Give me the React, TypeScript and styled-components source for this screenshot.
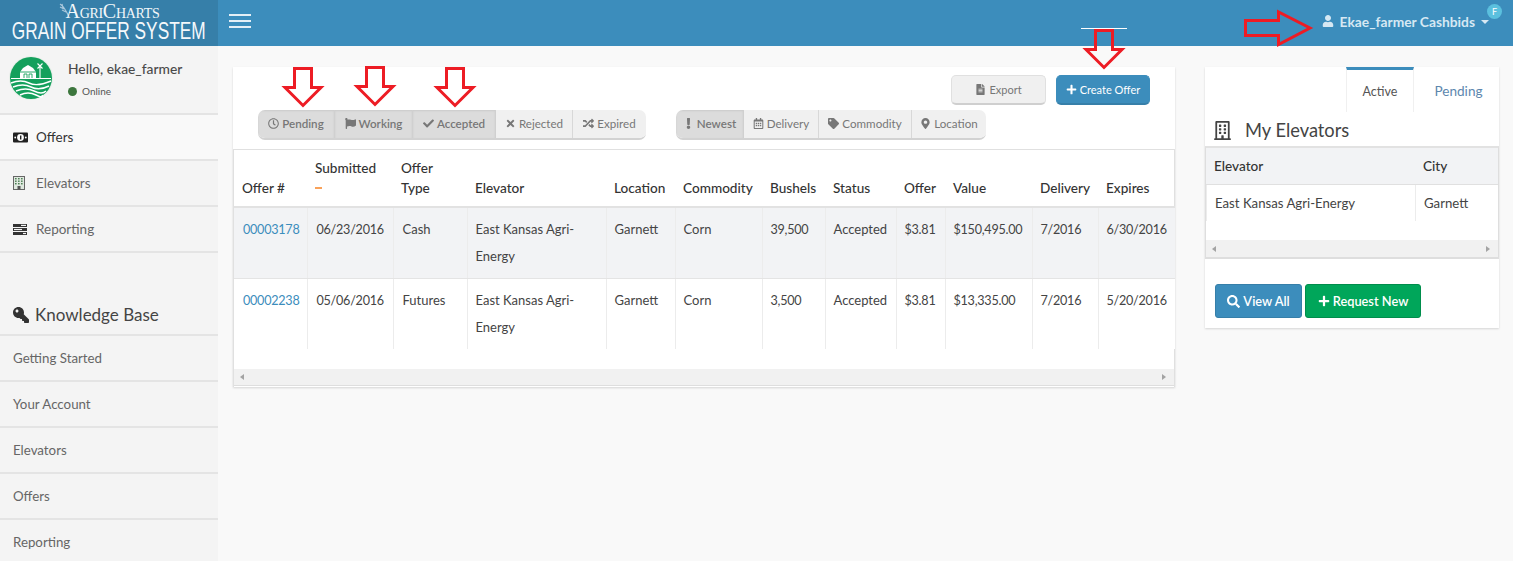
import React from "react";
import styled, { createGlobalStyle } from "styled-components";
import {
  FaRegClock, FaFlag, FaCheck, FaTimes, FaRandom, FaExclamation, FaRegCalendarAlt, FaTag,
  FaMapMarkerAlt, FaFileAlt, FaPlus, FaSearch, FaUser, FaRegBuilding, FaKey,
} from "react-icons/fa";

const Global = createGlobalStyle`
  html, body { margin: 0; padding: 0; height: 100%; overflow: hidden; background: #f9f9f9; }
  body { font-family: Lato, "Noto Sans", sans-serif; font-size: 14px; color: #333; }
  * { box-sizing: border-box; }
`;

const Page = styled.div`
  position: relative; width: 1513px; height: 561px; overflow: hidden;
  display: grid; grid-template-columns: 218px 1fr; grid-template-rows: 46px 1fr;
`;
const Logo = styled.div`
  background: #367fa9; color: #fff; display: flex; flex-direction: column; align-items: center; overflow: hidden;
`;
const Brand = styled.div`
  display: flex; align-items: flex-start; font-family: "Liberation Serif", serif; font-variant: small-caps; font-size: 20px; line-height: 16px; margin-top: 3px;
  letter-spacing: -0.3px; color: #f2f7fa;
`;
const Wheat = styled.svg`
  margin: 0 -5px 0 0;
`;
const SystemName = styled.div`
  font-family: "Liberation Sans", sans-serif; font-size: 24px; line-height: 24px; white-space: nowrap; transform: scaleX(0.72);
  color: #f4f8fb;
`;
const Navbar = styled.div`
  background: #3c8dbc; display: flex; align-items: center; justify-content: space-between; padding: 0 24px 0 11px; color: #fff;
`;
const Burger = styled.div`
  width: 22px; height: 14px; border-top: 2px solid #e4eff6; border-bottom: 2px solid #e4eff6; position: relative; margin-bottom: 4px;
  &::after { content: ""; position: absolute; left: 0; right: 0; top: 4px; height: 2px; background: #e4eff6; }
`;
const UserMenu = styled.div`
  position: relative; display: flex; align-items: center; gap: 6px; font-weight: 700; font-size: 13.8px; color: #d6e8f3; margin-bottom: 4px;
`;
const Caret = styled.span`
  width: 0; height: 0; border-left: 4px solid transparent; border-right: 4px solid transparent; border-top: 4px solid #d6e8f3; margin-top: 2px;
`;
const Badge = styled.span`
  position: absolute; right: -13px; top: -9px; width: 15px; height: 15px; border-radius: 50%; background: #5bc0de; color: #fff;
  font-size: 9px; font-weight: 400; display: flex; align-items: center; justify-content: center;
`;
const Sidebar = styled.aside`
  background: #f4f4f4; display: flex; flex-direction: column; color: #555;
`;
const UserPanel = styled.div`
  height: 67px; display: flex; gap: 15px; padding: 10px 9px;
`;
const Hello = styled.div`
  font-size: 13.8px; color: #4a4a4a; margin-top: 5px; font-weight: 500; line-height: 15px;
`;
const Online = styled.div`
  font-size: 10px; color: #555; display: flex; align-items: center; gap: 5px; margin-top: 9px;
`;
const Dot = styled.span`
  width: 9px; height: 9px; border-radius: 50%; background: #3c763d;
`;
const MenuItem = styled.div<{ $active?: boolean }>`
  height: 46px; border-top: 2px solid #e4e4e4; display: flex; align-items: center; gap: 8px; padding-left: 13px; font-size: 13.5px;
  background: ${p => (p.$active ? "#f9f9f9" : "transparent")}; color: ${p => (p.$active ? "#333" : "#666")};
`;
const MenuIcon = styled.span`
  width: 15px; display: flex; justify-content: flex-start;
`;
const MenuEnd = styled.div`
  height: 2px; background: #e4e4e4; flex: none;
`;
const KeyIcon = styled(FaKey)`
  transform: scaleX(-1); color: #333; font-size: 16px;
`;
const KbTitle = styled.div`
  margin-top: 47px; height: 34px; display: flex; align-items: center; gap: 6px; padding: 0 0 5px 13px; font-size: 17px; color: #444;
`;
const KbItem = styled.div`
  height: 46px; border-top: 2px solid #e4e4e4; display: flex; align-items: center; padding-left: 13px; font-size: 13.3px; color: #666;
`;
const Main = styled.main`
  display: flex; align-items: flex-start; gap: 30px; padding: 21px 14px 0 15px;
`;
const Card = styled.section<{ $w: number; $h: number }>`
  width: ${p => p.$w}px; height: ${p => p.$h}px; background: #fff; box-shadow: 0 1px 2px rgba(0,0,0,.15); flex: none; display: flex; flex-direction: column;
`;
const Toolbar = styled.div`
  height: 82px; display: grid; grid-template-columns: 1fr auto; align-content: start; padding: 8px 25px 0 25px;
`;
const TopActions = styled.div`
  grid-column: 1 / 3; display: flex; justify-content: flex-end; gap: 10px; height: 30px;
`;
const Action = styled.div<{ $primary?: boolean }>`
  width: ${p => (p.$primary ? 94 : 95)}px; height: 30px; padding-bottom: 1px; border-radius: 5px; display: flex; align-items: center; justify-content: center; gap: 3px; font-size: 11px;
  background: ${p => (p.$primary ? "#3c8dbc" : "#f0f0f0")}; color: ${p => (p.$primary ? "#fff" : "#777")};
  border: 1px solid ${p => (p.$primary ? "#3c8dbc" : "#e0e0e0")}; border-bottom: 2px solid ${p => (p.$primary ? "#367fa9" : "#cfcfcf")};
  & svg { font-size: 11px; }
`;
const Filters = styled.div`
  grid-column: 1 / 3; display: flex; gap: 30px; margin-top: 5px;
`;
const Group = styled.div`
  display: flex; height: 30px; border-radius: 7px; overflow: hidden; border-bottom: 2px solid #d2d2d2;
`;
const Seg = styled.div<{ $on?: boolean; $w: number }>`
  width: ${p => p.$w}px; padding-bottom: 1px; display: flex; align-items: center; justify-content: center; gap: 3px; font-size: 11.6px; color: #777;
  font-weight: ${p => (p.$on ? 600 : 400)};
  background: ${p => (p.$on ? "#dcdcdc" : "#f0f0f0")}; border-right: 1px solid ${p => (p.$on ? "#d0d0d0" : "#d8d8d8")};
  ${p => (p.$on ? "box-shadow: inset 0 1px 2px rgba(0,0,0,.08);" : "")}
  &:last-child { border-right: 0; }
  & svg { font-size: 11px; }
`;
const TableWrap = styled.div`
  flex: 1; border: 1px solid #e0e0e0; border-width: 1px 1px 0 1px; display: flex; flex-direction: column; justify-content: space-between;
`;
const Table = styled.table`
  border-collapse: collapse; table-layout: fixed; width: 941px; font-size: 13px;
`;
const Th = styled.th<{ $w: number }>`
  width: ${p => p.$w}px; height: 57px; padding: 0 8px 8px; text-align: left; vertical-align: bottom; font-weight: 500; color: #333; line-height: 20px; border-bottom: 2px solid #e2e2e2; font-size: 13.6px;
  white-space: nowrap;
`;
const Tr = styled.tr<{ $alt?: boolean }>`
  background: ${p => (p.$alt ? "#f2f3f5" : "#fff")};
`;
const Td = styled.td<{ $num?: boolean }>`
  height: 71px; padding: 8px 4px 0 8px; vertical-align: top; line-height: 27px; color: #444; border-left: 1px solid #ececec; border-bottom: 1px solid #e4e4e4;
  ${p => (p.$num ? "font-size: 12.6px; letter-spacing: -0.25px;" : "")}
  &:nth-child(-n + 3) { padding-left: 9px; }
  &:first-child { border-left: 0; }
  tr:last-child > & { border-bottom: 0; }
`;
const NumLink = styled.span`
  color: #3c8dbc;
`;
const SortMark = styled.span`
  display: block; width: 7px; height: 2px; background: #f9a25a; margin: 9px 0;
`;
const Scroll = styled.div<{ $flat?: boolean }>`
  height: 17px; background: #f1f1f1; display: flex; align-items: center; justify-content: space-between; padding: 0 8px 0 6px; flex: none;
  ${p => (p.$flat ? "" : "border-bottom: 1px solid #dedede; margin-bottom: 1px;")}
`;
const Arrowhead = styled.span<{ $dir: "l" | "r" }>`
  width: 0; height: 0; border-top: 3.5px solid transparent; border-bottom: 3.5px solid transparent;
  ${p => (p.$dir === "l" ? "border-right: 4px solid #a3a3a3;" : "border-left: 4px solid #a3a3a3;")}
`;
const Tabs = styled.div`
  display: flex; justify-content: flex-end; height: 45px;
`;
const Tab = styled.div<{ $on?: boolean }>`
  width: 68px; display: flex; align-items: center; justify-content: center; font-size: 12.5px;
  ${p => (p.$on ? "border-top: 3px solid #3c8dbc; border-left: 1px solid #f0f0f0; border-right: 1px solid #f0f0f0; color: #555;" : "color: #5d87ae; margin-top: 3px; width: 85px; font-size: 13.6px; padding-left: 4px;")}
`;
const PanelTitle = styled.h2`
  margin: 0; height: 34px; padding: 2px 0 0 8px; display: flex; align-items: center; gap: 13px; font-size: 18.3px; font-weight: 400; color: #444;
  & svg { font-size: 19px; color: #444; }
`;
const SideTable = styled.div`
  border: 1px solid #dedede; border-width: 2px 1px 2px 1px; border-top-color: #e2e2e2; height: 113px; display: flex; flex-direction: column;
`;
const SideHead = styled.div`
  display: grid; grid-template-columns: 209px 1fr; height: 37px; align-items: center; background: #f2f3f5; border-bottom: 1px solid #e0e0e0; font-weight: 500; font-size: 13.6px; padding-left: 8px; color: #333;
`;
const SideRow = styled.div`
  display: grid; grid-template-columns: 209px 1fr; height: 36px; align-items: stretch; font-size: 13.2px; color: #444; margin-left: 0;
`;
const SideCell = styled.div`
  display: flex; align-items: center; padding-left: 8px; border-left: 1px solid #ececec;
`;
const Spacer = styled.div`
  flex: 1;
`;
const Buttons = styled.div`
  display: flex; gap: 3px; padding: 25px 0 0 10px;
`;
const Btn = styled.div<{ $green?: boolean; $w: number }>`
  width: ${p => p.$w}px; height: 34px; border-radius: 3px; color: #fff; display: flex; align-items: center; justify-content: center; gap: 3px; font-size: 12.8px; font-weight: 600;
  background: ${p => (p.$green ? "#00a65a" : "#3c8dbc")}; border: 1px solid ${p => (p.$green ? "#008d4c" : "#367fa9")};
`;
const Mark = styled.svg<{ $x: number; $y: number }>`
  position: absolute; left: ${p => p.$x}px; top: ${p => p.$y}px; overflow: visible;
`;
const Rule = styled.div`
  position: absolute; left: 1081px; top: 28px; width: 46px; height: 1px; background: #fff;
`;

const DownArrow = ({ x, y }: { x: number; y: number }) => (
  <Mark $x={x} $y={y} width="42" height="40" viewBox="0 0 42 40">
    <path d="M12.5 1.5H29.5V20.5H39L21 38.5L3 20.5H12.5Z" fill="none" stroke="#ed1c24" strokeWidth="3" />
  </Mark>
);

const Money = () => (
  <svg width="15" height="11" viewBox="0 0 15 11">
    <rect width="15" height="10" y="0.5" rx="1" fill="#222" />
    <circle cx="7.5" cy="5.5" r="3.4" fill="#fff" />
    <rect x="7" y="3.5" width="1.4" height="4" fill="#222" />
    <circle cx="2.2" cy="5.5" r="0.9" fill="#fff" /><circle cx="12.8" cy="5.5" r="0.9" fill="#fff" />
  </svg>
);
const Bldg = () => (
  <svg width="12" height="14" viewBox="0 0 12 14">
    <rect x=".5" y=".5" width="11" height="13" fill="#dfe8df" stroke="#666" />
    {[2, 5, 8].map(x => [2, 4.5, 7].map(y => <rect key={x + "-" + y} x={x} y={y} width="1.6" height="1.4" fill="#4d7f54" />))}
    <rect x="4.5" y="10" width="3" height="3.5" fill="#555" />
  </svg>
);
const Tasks = () => (
  <svg width="14" height="11" viewBox="0 0 14 11">
    <rect width="14" height="3" fill="#333" /><rect y="4" width="14" height="3" fill="#333" /><rect y="8" width="14" height="3" fill="#333" />
    <rect x="8" y=".8" width="5" height="1.2" fill="#f4f4f4" /><rect x="1" y="4.9" width="8" height="1.2" fill="#f4f4f4" /><rect x="10" y="8.9" width="3" height="1.2" fill="#f4f4f4" />
  </svg>
);
const Avatar = () => (
  <svg width="44" height="44" viewBox="0 0 44 44">
    <circle cx="22" cy="22" r="22" fill="#e8efe9" />
    <circle cx="22" cy="22" r="21" fill="#14a05c" />
    <path d="M11 23V16L14 12L19 9L24 12L27 16V23Z" fill="#fff" />
    <path d="M11 16H27M15 23V18H18V23M20 23V18H23V23" stroke="#14a05c" strokeWidth=".9" fill="none" />
    <path d="M31 10V23M28.5 7.5L33.500 12.500M33.500 7.500L28.500 12.500" stroke="#fff" strokeWidth="1.1" />
    <path d="M2 22.500H42" stroke="#fff" strokeWidth="1" />
    <path d="M2 27Q12 23 20 27T42 25M4 31Q14 27 22 31T40 30M7 35Q17 31 25 35T37 35M11 39Q19 35 27 39T33 39" stroke="#fff" strokeWidth="1.4" fill="none" />
  </svg>
);

const cols = [73, 86, 74, 139, 69, 87, 63, 71, 49, 87, 66, 77];
const heads = ["Offer #", "Submitted", "Offer Type", "Elevator", "Location", "Commodity", "Bushels", "Status", "Offer", "Value", "Delivery", "Expires"];
const numeric = new Set([0, 1, 6, 8, 9, 10, 11]);
const rows = [
  ["00003178", "06/23/2016", "Cash", "East Kansas Agri-Energy", "Garnett", "Corn", "39,500", "Accepted", "$3.81", "$150,495.00", "7/2016", "6/30/2016"],
  ["00002238", "05/06/2016", "Futures", "East Kansas Agri-Energy", "Garnett", "Corn", "3,500", "Accepted", "$3.81", "$13,335.00", "7/2016", "5/20/2016"],
];

export default function App() {
  return (
    <Page>
      <Global />
      <Logo>
        <Brand>
          <Wheat width="12" height="15" viewBox="0 0 12 15">
            <path d="M1 1C4 3 7 7 10 14M3 1L4 5M1 4L5 6M3 7L7 9" stroke="#a9c8dc" strokeWidth="1.1" fill="none" />
          </Wheat>
          AgriCharts
        </Brand>
        <SystemName>GRAIN OFFER SYSTEM</SystemName>
      </Logo>
      <Navbar>
        <Burger />
        <UserMenu>
          <FaUser size={12} />
          <span>Ekae_farmer Cashbids</span>
          <Caret />
          <Badge>F</Badge>
        </UserMenu>
      </Navbar>
      <Sidebar>
        <UserPanel>
          <Avatar />
          <div>
            <Hello>Hello, ekae_farmer</Hello>
            <Online><Dot />Online</Online>
          </div>
        </UserPanel>
        <MenuItem $active><MenuIcon><Money /></MenuIcon>Offers</MenuItem>
        <MenuItem><MenuIcon><Bldg /></MenuIcon>Elevators</MenuItem>
        <MenuItem><MenuIcon><Tasks /></MenuIcon>Reporting</MenuItem>
        <MenuEnd />
        <KbTitle><KeyIcon />Knowledge Base</KbTitle>
        <KbItem>Getting Started</KbItem>
        <KbItem>Your Account</KbItem>
        <KbItem>Elevators</KbItem>
        <KbItem>Offers</KbItem>
        <KbItem>Reporting</KbItem>
      </Sidebar>
      <Main>
        <Card $w={942} $h={320}>
          <Toolbar>
            <TopActions>
              <Action><FaFileAlt />Export</Action>
              <Action $primary><FaPlus />Create Offer</Action>
            </TopActions>
            <Filters>
              <Group>
                <Seg $on $w={77}><FaRegClock />Pending</Seg>
                <Seg $on $w={78}><FaFlag />Working</Seg>
                <Seg $on $w={83}><FaCheck />Accepted</Seg>
                <Seg $w={77}><FaTimes />Rejected</Seg>
                <Seg $w={73}><FaRandom />Expired</Seg>
              </Group>
              <Group>
                <Seg $on $w={68}><FaExclamation />Newest</Seg>
                <Seg $w={75}><FaRegCalendarAlt />Delivery</Seg>
                <Seg $w={93}><FaTag />Commodity</Seg>
                <Seg $w={74}><FaMapMarkerAlt />Location</Seg>
              </Group>
            </Filters>
          </Toolbar>
          <TableWrap>
            <Table>
              <thead>
                <tr>
                  {heads.map((h, i) => (
                    <Th key={h} $w={cols[i]}>
                      {h === "Offer Type" ? <>Offer<br />Type</> : h}
                      {h === "Submitted" && <SortMark />}
                    </Th>
                  ))}
                </tr>
              </thead>
              <tbody>
                {rows.map((r, ri) => (
                  <Tr key={r[0]} $alt={ri === 0}>
                    {r.map((c, i) => (
                      <Td key={i} $num={numeric.has(i)}>{i === 0 ? <NumLink>{c}</NumLink> : c}</Td>
                    ))}
                  </Tr>
                ))}
              </tbody>
            </Table>
            <Scroll><Arrowhead $dir="l" /><Arrowhead $dir="r" /></Scroll>
          </TableWrap>
        </Card>
        <Card $w={294} $h={261}>
          <Tabs>
            <Tab $on>Active</Tab>
            <Tab>Pending</Tab>
          </Tabs>
          <PanelTitle><FaRegBuilding />My Elevators</PanelTitle>
          <SideTable>
            <SideHead><span>Elevator</span><span>City</span></SideHead>
            <SideRow>
              <SideCell>East Kansas Agri-Energy</SideCell>
              <SideCell>Garnett</SideCell>
            </SideRow>
            <Spacer />
            <Scroll $flat><Arrowhead $dir="l" /><Arrowhead $dir="r" /></Scroll>
          </SideTable>
          <Buttons>
            <Btn $w={87}><FaSearch size={13} />View All</Btn>
            <Btn $green $w={116}><FaPlus size={12} />Request New</Btn>
          </Buttons>
        </Card>
      </Main>
      <DownArrow x={282} y={67} />
      <DownArrow x={354} y={66} />
      <DownArrow x={434} y={67} />
      <DownArrow x={1083} y={29} />
      <Rule />
      <Mark $x={1244} $y={9} width="70" height="38" viewBox="0 0 70 38">
        <path d="M1.500 11.500H34.500V3L66 19L34.500 35.500V26.500H1.500Z" fill="none" stroke="#ed1c24" strokeWidth="3" />
      </Mark>
    </Page>
  );
}
